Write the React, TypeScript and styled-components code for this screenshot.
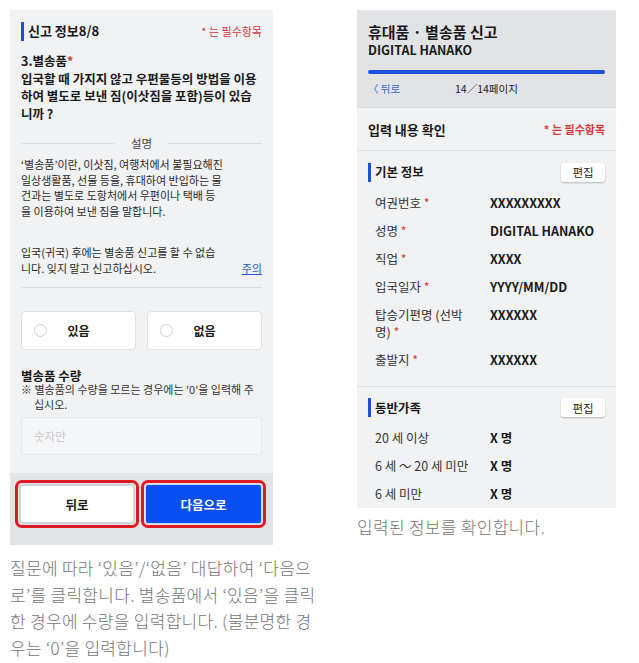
import { Fragment } from "react";
import styled, { createGlobalStyle } from "styled-components";

const GlobalStyle = createGlobalStyle`
  body {
    margin: 0;
    background: #ffffff;
    font-family: "Noto Sans CJK KR", "Noto Sans", sans-serif;
    color: #1a1a1a;
  }
`;

const Page = styled.div`
  display: flex;
  gap: 38px;
  padding: 10px 0 0 10px;
`;
const Column = styled.div<{ $w: number }>`
  display: flex;
  flex-direction: column;
  width: ${(p) => p.$w}px;
`;
const Phone = styled.section<{ $w: number; $h: number }>`
  display: flex;
  flex-direction: column;
  width: ${(p) => p.$w}px;
  height: ${(p) => p.$h}px;
  background: #f1f2f4;
  overflow: hidden;
`;
const Caption = styled.p<{ $top: number }>`
  margin: ${(p) => p.$top}px 0 0;
  font-size: 17px;
  line-height: 26.5px;
  letter-spacing: 0.3px;
  color: #767676;
  font-weight: 300;
`;

/* left screen */
const Body = styled.div`
  flex: 1;
  padding: 10px 11px 0;
`;
const HeadRow = styled.div`
  display: flex;
  align-items: center;
  justify-content: space-between;
  height: 22px;
`;
const SectionTitle = styled.h2<{ $size?: number }>`
  margin: 0;
  display: flex;
  align-items: center;
  gap: 4px;
  font-size: ${(p) => p.$size ?? 13}px;
  font-weight: 700;
  line-height: 20px;
  &::before {
    content: "";
    width: 3px;
    height: 19px;
    background: #1f4fd8;
  }
`;
const Required = styled.span`
  font-size: 11px;
  color: #d8383b;
`;
const Star = styled.span`
  color: #d8383b;
`;
const Question = styled.div`
  margin-top: 10px;
  font-size: 12.5px;
  font-weight: 700;
  line-height: 17.5px;
`;
const Divider = styled.div`
  display: flex;
  align-items: center;
  margin-top: 12px;
  font-size: 11.5px;
  line-height: 18px;
  color: #444;
  &::before,
  &::after {
    content: "";
    flex: 1;
    height: 1px;
    background: #dcdde0;
  }
  & > span {
    padding: 0 16px;
  }
`;
const Explain = styled.div`
  display: grid;
  grid-template-columns: 203px 1fr;
  align-items: end;
  margin-top: 5px;
`;
const Para = styled.p<{ $gap?: number }>`
  margin: ${(p) => p.$gap ?? 0}px 0 0;
  font-size: 11px;
  line-height: 15.7px;
  color: #2a2a2a;
`;
const Link = styled.a`
  justify-self: end;
  font-size: 11px;
  line-height: 15.7px;
  color: #2a5bd7;
  text-decoration: underline;
`;
const Rule = styled.hr`
  margin: 11px 0 0;
  border: 0;
  border-top: 1px solid #dcdde0;
`;
const Options = styled.div`
  display: grid;
  grid-template-columns: 1fr 1fr;
  gap: 11px;
  margin-top: 23px;
`;
const Option = styled.label`
  display: grid;
  grid-template-columns: 1fr auto 1fr;
  align-items: center;
  height: 39px;
  padding: 0 12px;
  background: #ffffff;
  border: 1px solid #dfe0e3;
  border-radius: 4px;
  box-sizing: border-box;
  font-size: 12px;
  font-weight: 700;
`;
const Radio = styled.span`
  width: 11px;
  height: 11px;
  border: 1px solid #cfd0d3;
  border-radius: 50%;
  background: #fff;
`;
const FieldLabel = styled.div`
  margin-top: 18.5px;
  font-size: 12.5px;
  font-weight: 700;
  line-height: 13px;
`;
const Hint = styled.p`
  margin: 0;
  padding-left: 13px;
  text-indent: -13px;
  font-size: 11px;
  line-height: 15.5px;
  color: #333;
`;
const Input = styled.div`
  display: flex;
  align-items: center;
  height: 38px;
  margin-top: 4px;
  padding: 0 12px;
  border: 1px solid #e6e7ea;
  border-radius: 3px;
  background: #f4f5f7;
  box-sizing: border-box;
  font-size: 11.5px;
  color: #c8c9cc;
`;
const Footer = styled.div`
  display: grid;
  grid-template-columns: 116px 117px;
  gap: 10px;
  height: 72px;
  padding: 11px 0 0 9px;
  box-sizing: border-box;
  background: #e3e4e6;
`;
const Action = styled.button<{ $primary?: boolean }>`
  height: 40px;
  border: ${(p) => (p.$primary ? "1px solid #c9d3ef" : "2px solid #d3d4d7")};
  border-radius: 3px;
  font-family: inherit;
  font-size: 12.5px;
  font-weight: 700;
  background: ${(p) => (p.$primary ? "#0a4ff4" : "#ffffff")};
  color: ${(p) => (p.$primary ? "#ffffff" : "#1a1a1a")};
  box-shadow: 0 0 0 1px #e3e4e6, 0 0 0 4px #de1a22;
  outline: none;
  padding: 0;
`;

/* right screen */
const Header = styled.header`
  height: 98px;
  padding: 12px 11px 0;
  box-sizing: border-box;
  background: #e2e3e6;
  border-bottom: 1px solid #d8d9dc;
`;
const AppTitle = styled.h1`
  margin: 0;
  font-size: 15px;
  font-weight: 700;
  line-height: 20px;
`;
const UserName = styled.div`
  font-size: 12.5px;
  font-weight: 700;
  line-height: 16px;
`;
const Progress = styled.div`
  height: 4px;
  margin-top: 11.5px;
  border-radius: 2px;
  background: #1d4fdc;
`;
const PageNav = styled.div`
  display: flex;
  align-items: center;
  margin-top: 8px;
  font-size: 10.5px;
  line-height: 14px;
`;
const Back = styled.span`
  width: 87px;
  color: #3463d6;
`;
const Block = styled.div<{ $pad?: string }>`
  padding: ${(p) => p.$pad ?? "0 11px"};
  border-bottom: 1px solid #dfe0e3;
  &:last-child {
    border-bottom: 0;
  }
`;
const ConfirmRow = styled.div`
  display: flex;
  align-items: center;
  justify-content: space-between;
  height: 42px;
  font-size: 13px;
  font-weight: 700;
`;
const EditBtn = styled.button`
  width: 44px;
  height: 19px;
  border: 0;
  border-radius: 3px;
  background: #ffffff;
  box-shadow: 0 1px 2px rgba(0, 0, 0, 0.25);
  font-family: inherit;
  font-size: 11.5px;
  color: #222;
  padding: 0;
`;
const InfoTable = styled.dl<{ $top?: number }>`
  display: grid;
  grid-template-columns: 115px 1fr;
  margin: ${(p) => p.$top ?? 5.5}px 0 0;
  padding-left: 7px;
  font-size: 12.5px;
  line-height: 17px;
`;
const Term = styled.dt<{ $nowrap?: boolean }>`
  color: #333;
  padding: 5.5px 20px 5.5px 0;
  white-space: ${(p) => (p.$nowrap ? "nowrap" : "normal")};
`;
const Value = styled.dd`
  margin: 0;
  padding: 5.5px 0;
  font-weight: 700;
`;

const basic: [string, string][] = [
  ["여권번호", "XXXXXXXXX"],
  ["성명", "DIGITAL HANAKO"],
  ["직업", "XXXX"],
  ["입국일자", "YYYY/MM/DD"],
  ["탑승기편명 (선박명)", "XXXXXX"],
  ["출발지", "XXXXXX"],
];
const family: [string, string][] = [
  ["20 세 이상", "X 명"],
  ["6 세 ～ 20 세 미만", "X 명"],
  ["6 세 미만", "X 명"],
];

export default function App() {
  return (
    <>
      <GlobalStyle />
      <Page>
        <Column $w={309}>
          <Phone $w={263} $h={535}>
            <Body>
              <HeadRow>
                <SectionTitle>신고 정보8/8</SectionTitle>
                <Required>* 는 필수항목</Required>
              </HeadRow>
              <Question>
                3.별송품<Star>*</Star>
                <br />
                입국할 때 가지지 않고 우편물등의 방법을 이용하여 별도로 보낸 짐(이삿짐을 포함)등이 있습니까 ?
              </Question>
              <Divider>
                <span>설명</span>
              </Divider>
              <Explain>
                <div>
                  <Para>
                    ‘별송품’이란, 이삿짐, 여행처에서 불필요해진 일상생활품, 선물 등을, 휴대하여 반입하는 물건과는 별도로 도항처에서 우편이나 택배 등을 이용하여 보낸 짐을 말합니다.
                  </Para>
                  <Para $gap={25}>입국(귀국) 후에는 별송품 신고를 할 수 없습니다. 잊지 말고 신고하십시오.</Para>
                </div>
                <Link>주의</Link>
              </Explain>
              <Rule />
              <Options>
                <Option>
                  <Radio />
                  있음
                </Option>
                <Option>
                  <Radio />
                  없음
                </Option>
              </Options>
              <FieldLabel>별송품 수량</FieldLabel>
              <Hint>※ 별송품의 수량을 모르는 경우에는 '0'을 입력해 주십시오.</Hint>
              <Input>숫자만</Input>
            </Body>
            <Footer>
              <Action>뒤로</Action>
              <Action $primary>다음으로</Action>
            </Footer>
          </Phone>
          <Caption $top={10}>
            질문에 따라 ‘있음’/‘없음’ 대답하여 ‘다음으로’를 클릭합니다. 별송품에서 ‘있음’을 클릭한 경우에 수량을 입력합니다. (불분명한 경우는 ‘0’을 입력합니다)
          </Caption>
        </Column>
        <Column $w={259}>
          <Phone $w={259} $h={498}>
            <Header>
              <AppTitle>휴대품 · 별송품 신고</AppTitle>
              <UserName>DIGITAL HANAKO</UserName>
              <Progress />
              <PageNav>
                <Back>〈 뒤로</Back>
                <span>14／14페이지</span>
              </PageNav>
            </Header>
            <Block>
              <ConfirmRow>
                <span>입력 내용 확인</span>
                <Required>* 는 필수항목</Required>
              </ConfirmRow>
            </Block>
            <Block $pad="10px 11px 12px">
              <HeadRow>
                <SectionTitle $size={12.5}>기본 정보</SectionTitle>
                <EditBtn>편집</EditBtn>
              </HeadRow>
              <InfoTable>
                {basic.map(([k, v]) => (
                  <Fragment key={k}>
                    <Term>
                      {k} <Star>*</Star>
                    </Term>
                    <Value>{v}</Value>
                  </Fragment>
                ))}
              </InfoTable>
            </Block>
            <Block $pad="10px 11px 0">
              <HeadRow>
                <SectionTitle $size={12.5}>동반가족</SectionTitle>
                <EditBtn>편집</EditBtn>
              </HeadRow>
              <InfoTable $top={4.5}>
                {family.map(([k, v]) => (
                  <Fragment key={k}>
                    <Term $nowrap>{k}</Term>
                    <Value>{v}</Value>
                  </Fragment>
                ))}
              </InfoTable>
            </Block>
          </Phone>
          <Caption $top={6}>입력된 정보를 확인합니다.</Caption>
        </Column>
      </Page>
    </>
  );
}
